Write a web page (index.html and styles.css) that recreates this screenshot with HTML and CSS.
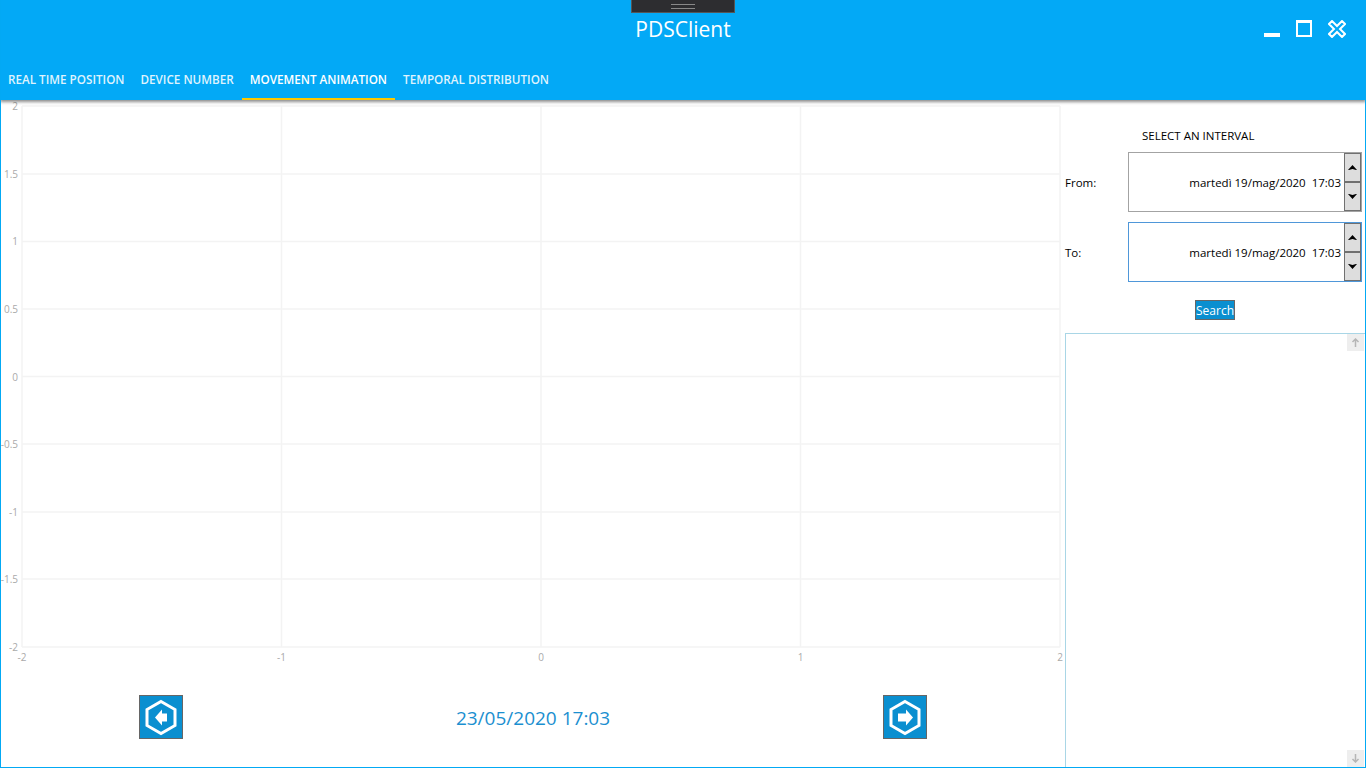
FILE: index.html
```html
<!DOCTYPE html>
<html lang="it">
<head>
    <meta charset="UTF-8">
    <title>PDSClient</title>
    <link rel="stylesheet" href="styles.css">
</head>
<body>
    <div class="drag-handle"><span></span></div>

    <header class="app-header">
        <div class="title-row">
            <div></div>
            <h1 class="app-title">PDSClient</h1>
            <div class="window-controls">
                <svg width="16" height="17" viewBox="0 0 16 17"><rect x="0" y="13" width="16" height="4" fill="#fff"/></svg>
                <svg width="16" height="17" viewBox="0 0 16 17"><path d="M0 0h16v17H0z M2 3v12h12V3z" fill="#fff" fill-rule="evenodd"/></svg>
                <svg width="18" height="18" viewBox="0 0 18 18"><path d="M4 1L9 6L14 1L17 4L12 9L17 14L14 17L9 12L4 17L1 14L6 9L1 4Z" fill="none" stroke="#fff" stroke-width="2"/></svg>
            </div>
        </div>
        <nav class="tabs">
            <a class="tab">REAL TIME POSITION</a>
            <a class="tab">DEVICE NUMBER</a>
            <a class="tab active">MOVEMENT ANIMATION</a>
            <a class="tab">TEMPORAL DISTRIBUTION</a>
        </nav>
    </header>

    <main class="content">
        <section class="chart-area">
            <svg class="chart" width="1062" height="570" viewBox="0 0 1062 570">
                <g class="grid">
                    <path d="M21 6V547M280.500 6V547M540 6V547M799.500 6V547M1059 6V547"/>
                    <path d="M21 6H1059M21 74H1059M21 141.500H1059M21 209H1059M21 276.500H1059M21 344H1059M21 412H1059M21 479H1059M21 547H1059"/>
                </g>
                <g class="y-labels">
                    <text x="17" y="10">2</text>
                    <text x="17" y="78">1.5</text>
                    <text x="17" y="145">1</text>
                    <text x="17" y="213">0.5</text>
                    <text x="17" y="281">0</text>
                    <text x="17" y="348">-0.5</text>
                    <text x="17" y="416">-1</text>
                    <text x="17" y="483">-1.5</text>
                    <text x="17" y="551">-2</text>
                </g>
                <g class="x-labels">
                    <text x="21" y="561">-2</text>
                    <text x="280.500" y="561">-1</text>
                    <text x="540" y="561">0</text>
                    <text x="799.500" y="561">1</text>
                    <text x="1059" y="561">2</text>
                </g>
            </svg>

            <div class="player">
                <button class="icon-button">
                    <svg width="42" height="42" viewBox="0 0 42 42">
                        <path class="hexagon" d="M21 5.500L35 13.500V29.500L21 37.500L7 29.500V13.500Z"/>
                        <path class="arrow" d="M15 21.500L22 13.500V17.500H27V25.500H22V29.500Z"/>
                    </svg>
                </button>
                <span class="current-date">23/05/2020 17:03</span>
                <button class="icon-button">
                    <svg width="42" height="42" viewBox="0 0 42 42">
                        <path class="hexagon" d="M21 5.500L35 13.500V29.500L21 37.500L7 29.500V13.500Z"/>
                        <path class="arrow" d="M29 21.500L22 13.500V17.500H14V25.500H22V29.500Z"/>
                    </svg>
                </button>
            </div>
        </section>

        <aside class="side-panel">
            <div class="panel-title">SELECT AN INTERVAL</div>

            <div class="date-row">
                <label>From:</label>
                <div class="date-box">
                    <span class="date-value">martedì 19/mag/2020&nbsp; 17:03</span>
                    <div class="spinner">
                        <button><svg width="9" height="5" viewBox="0 0 9 5"><path d="M0 5L4.500 0L9 5H8L4.500 4L1 5Z"/></svg></button>
                        <button><svg width="9" height="5" viewBox="0 0 9 5"><path d="M0 0L4.500 5L9 0H8L4.500 1L1 0Z"/></svg></button>
                    </div>
                </div>
            </div>

            <div class="date-row">
                <label>To:</label>
                <div class="date-box focused">
                    <span class="date-value">martedì 19/mag/2020&nbsp; 17:03</span>
                    <div class="spinner">
                        <button><svg width="9" height="5" viewBox="0 0 9 5"><path d="M0 5L4.500 0L9 5H8L4.500 4L1 5Z"/></svg></button>
                        <button><svg width="9" height="5" viewBox="0 0 9 5"><path d="M0 0L4.500 5L9 0H8L4.500 1L1 0Z"/></svg></button>
                    </div>
                </div>
            </div>

            <div class="search-row">
                <button class="search-button">Search</button>
            </div>

            <div class="result-list">
                <div class="scrollbar">
                    <div class="scroll-button"><svg width="9" height="9" viewBox="0 0 9 9"><path d="M4.500 1V9M1.500 4L4.500 1L7.500 4"/></svg></div>
                    <div class="scroll-button"><svg width="9" height="9" viewBox="0 0 9 9"><path d="M4.500 0V8M1.500 5L4.500 8L7.500 5"/></svg></div>
                </div>
            </div>
        </aside>
    </main>
</body>
</html>
```

FILE: styles.css
```css
html, body {
    margin: 0;
    padding: 0;
    height: 100%;
}
body {
    box-sizing: border-box;
    height: 768px;
    overflow: hidden;
    display: flex;
    flex-direction: column;
    background-color: #fff;
    border: 1px solid #03a9f4;
    border-top: none;
    font-family: "Open Sans", "Noto Sans", sans-serif;
    font-size: 11.500px;
    color: #000;
}
button {
    font-family: inherit;
    padding: 0;
}

/* barra superiore */
.drag-handle {
    position: absolute;
    top: 0;
    left: 631px;
    width: 104px;
    height: 13px;
    box-sizing: border-box;
    background-color: #2d2d30;
    border: 1px solid #555;
    border-top: none;
    z-index: 2;
}
.drag-handle span {
    display: block;
    width: 24px;
    height: 3px;
    margin: 4px auto 0;
    border-top: 1px solid #888;
    border-bottom: 1px solid #888;
}
.app-header {
    position: relative;
    z-index: 1;
    flex: none;
    margin: 0 -1px;
    height: 100px;
    background-color: #03a9f6;
    box-shadow: 0 2px 3px rgba(0, 0, 0, 0.45);
    color: #fff;
}
.title-row {
    display: grid;
    grid-template-columns: 1fr auto 1fr;
    height: 61px;
}
.app-title {
    margin: 14px 0 0;
    font-size: 21px;
    line-height: 30px;
    font-weight: 400;
}
.window-controls {
    display: flex;
    justify-content: flex-end;
    align-items: flex-start;
    gap: 16px;
    padding: 20px 20px 0 0;
}
.tabs {
    display: flex;
    height: 39px;
}
.tab {
    box-sizing: border-box;
    height: 39px;
    padding: 10px 8px 0;
    font-size: 11.700px;
    line-height: 16px;
    font-weight: 600;
    color: #dff3fe;
    white-space: nowrap;
}
.tab.active {
    color: #fff;
    border-bottom: 2px solid #fdc800;
}

/* contenuto */
.content {
    flex: 1;
    display: flex;
    min-height: 0;
}
.chart-area {
    width: 1062px;
    flex: none;
}
.chart {
    display: block;
}
.grid path {
    fill: none;
    stroke: #f3f3f3;
    stroke-width: 1.500;
}
.y-labels text,
.x-labels text {
    font-size: 10px;
    fill: #aaa;
}
.y-labels text {
    text-anchor: end;
}
.x-labels text {
    text-anchor: middle;
}
.player {
    display: flex;
    justify-content: space-between;
    align-items: center;
    padding: 25px 136px 0 138px;
}
.icon-button {
    width: 44px;
    height: 44px;
    box-sizing: border-box;
    background-color: #0a8fd0;
    border: 1px solid #666;
}
.icon-button svg {
    display: block;
}
.hexagon {
    fill: none;
    stroke: #fff;
    stroke-width: 3;
}
.arrow {
    fill: #fff;
}
.current-date {
    padding-top: 2px;
    font-size: 19px;
    color: #1b8fd0;
}

/* pannello laterale */
.side-panel {
    flex: 1;
    display: flex;
    flex-direction: column;
    padding: 0 0 0 2px;
    min-width: 0;
}
.panel-title {
    height: 52px;
    box-sizing: border-box;
    padding: 28px 0 0 77px;
    line-height: 16px;
}
.date-row {
    display: flex;
    align-items: center;
    height: 60px;
    margin-bottom: 10px;
    line-height: 18px;
}
.date-row label {
    width: 63px;
    flex: none;
    padding-top: 1px;
}
.date-box {
    width: 234px;
    height: 60px;
    box-sizing: border-box;
    display: flex;
    align-items: center;
    justify-content: flex-end;
    border: 1px solid #a3a3a3;
}
.date-box.focused {
    border-color: #4f97d9;
}
.date-value {
    margin-right: 3px;
    padding-top: 1px;
    white-space: nowrap;
}
.spinner {
    width: 17px;
    height: 58px;
    display: flex;
    flex-direction: column;
    flex: none;
}
.spinner button {
    flex: 1;
    box-sizing: border-box;
    background-color: #ddd;
    border: 1px solid #707070;
    display: flex;
    align-items: center;
    justify-content: center;
}
.search-row {
    display: flex;
    justify-content: center;
    width: 300px;
    margin-top: 8px;
    height: 33px;
}
.search-button {
    width: 40px;
    height: 20px;
    background-color: #0a8fd0;
    border: 1px solid #666;
    color: #fff;
    font-size: 12px;
    line-height: 18px;
    padding-top: 1px;
}
.result-list {
    flex: 1;
    box-sizing: border-box;
    display: flex;
    justify-content: flex-end;
    padding-right: 1px;
    border: 1px solid #a9d6e6;
    border-right: none;
    border-bottom: none;
}
.scrollbar {
    width: 17px;
    display: flex;
    flex-direction: column;
    justify-content: space-between;
}
.scroll-button {
    height: 17px;
    background-color: #eee;
    display: flex;
    align-items: center;
    justify-content: center;
}
.scroll-button path {
    fill: none;
    stroke: #b5b5b5;
    stroke-width: 1.500;
}
```
